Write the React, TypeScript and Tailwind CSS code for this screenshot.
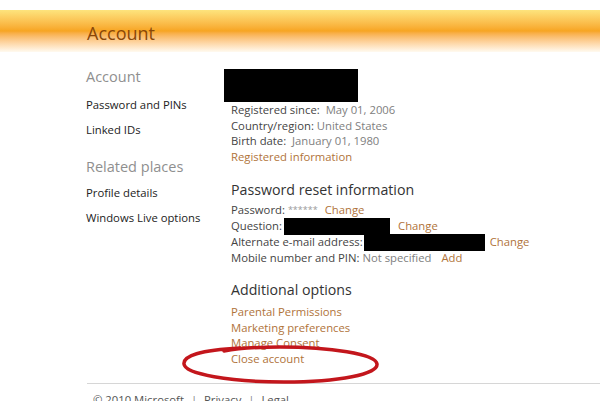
import React from "react";

const font = { fontFamily: '"Open Sans", "Noto Sans", sans-serif' };

const Link = ({ children }: { children: React.ReactNode }) => (
  <span className="text-[#b0733a] cursor-pointer">{children}</span>
);

export default function App() {
  return (
    <div className="relative w-[600px] h-[401px] overflow-hidden bg-white text-[11.3px]" style={font}>
      {/* header band */}
      <div className="h-[52px] pt-[10px]">
        <div className="h-[42px] bg-gradient-to-b from-[#fde47c] via-[#f7a521] to-[#fffaf0] flex items-start pl-[87px] pt-[12px]">
          <span className="text-[18px] leading-[22px] text-[#8a4708]">Account</span>
        </div>
      </div>

      <div className="flex">
        {/* left nav */}
        <div className="w-[230px] pl-[86px] pt-[15px] shrink-0">
          <div className="text-[14.5px] leading-[20px] text-[#8f8f8f]">Account</div>
          <div className="mt-[5px] leading-[25px] text-[#222] whitespace-nowrap">Password and PINs</div>
          <div className="leading-[25px] text-[#222]">Linked IDs</div>
          <div className="mt-[15px] text-[14.5px] leading-[20px] text-[#8f8f8f] whitespace-nowrap">Related places</div>
          <div className="mt-[3px] leading-[25px] text-[#222] whitespace-nowrap">Profile details</div>
          <div className="leading-[25px] text-[#222] whitespace-nowrap">Windows Live options</div>
        </div>

        {/* main column */}
        <div className="flex-1 pl-[1px]">
          <div className="mt-[17px] ml-[-7px] w-[134px] h-[33px] bg-black" />
          <div className="leading-[15.5px] text-[#444]">
            <div>
              Registered since:&nbsp; <span className="text-[#808080]">May 01, 2006</span>
            </div>
            <div>
              Country/region: <span className="text-[#808080]">United States</span>
            </div>
            <div>
              Birth date:&nbsp; <span className="text-[#808080]">January 01, 1980</span>
            </div>
            <div>
              <Link>Registered information</Link>
            </div>
          </div>

          <div className="mt-[16px] text-[14.2px] leading-[20px] text-[#333]">Password reset information</div>
          <div className="mt-[2px] text-[#444]">
            <div className="h-[16px] flex items-center whitespace-nowrap">
              Password: <span className="ml-[3px] text-[#999] text-[9px]">******</span>
              <span className="ml-[7px]">
                <Link>Change</Link>
              </span>
            </div>
            <div className="h-[16px] flex items-center whitespace-nowrap">
              Question:
              <span className="ml-[2px] w-[106px] h-[17px] bg-black inline-block" />
              <span className="ml-[8px]">
                <Link>Change</Link>
              </span>
            </div>
            <div className="h-[16px] flex items-center whitespace-nowrap">
              Alternate e-mail address:
              <span className="ml-[1px] w-[121px] h-[17px] bg-black inline-block" />
              <span className="ml-[5px]">
                <Link>Change</Link>
              </span>
            </div>
            <div className="h-[16px] flex items-center whitespace-nowrap">
              Mobile number and PIN:&nbsp;<span className="text-[#808080]">Not specified</span>
              <span className="ml-[10px]">
                <Link>Add</Link>
              </span>
            </div>
          </div>

          <div className="mt-[14px] text-[14.2px] leading-[20px] text-[#333]">Additional options</div>
          <div className="mt-[4px] leading-[15.5px]">
            <div><Link>Parental Permissions</Link></div>
            <div><Link>Marketing preferences</Link></div>
            <div><Link>Manage Consent</Link></div>
            <div><Link>Close account</Link></div>
          </div>
        </div>
      </div>

      {/* footer */}
      <div className="mt-[17px] ml-[87px] border-t border-[#d6d6d6] pt-[8px] pl-[6px] text-[#555] leading-[16px] whitespace-nowrap">
        © 2010 Microsoft <span className="mx-[4px] text-[#888]">|</span> Privacy <span className="mx-[4px] text-[#888]">|</span> Legal
      </div>

      {/* hand-drawn annotation */}
      <svg className="absolute left-[180px] top-[342px]" width="202" height="44" viewBox="0 0 202 44">
        <path
          d="M60 6 C20 8 3 14 4 22 C5 32 50 40 104 40 C160 40 198 32 197 22 C196 12 150 5 100 5 C80 5 60 6 44 9"
          fill="none"
          stroke="#c3161c"
          strokeWidth="3.5"
          strokeLinecap="round"
        />
      </svg>
    </div>
  );
}
